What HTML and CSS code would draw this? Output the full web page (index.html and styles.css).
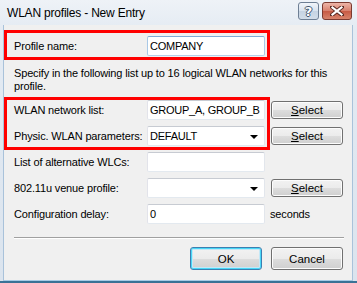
FILE: index.html
```html
<!DOCTYPE html>
<html>
<head>
<meta charset="utf-8">
<link rel="stylesheet" href="styles.css">
</head>
<body>
<div class="window">
  <div class="titlebar">
    <span class="title">WLAN profiles - New Entry</span>
    <div class="caption-btns">
      <span class="cbtn help">?</span>
      <span class="cbtn close">
        <svg width="14" height="10" viewBox="0 0 14 10">
          <path d="M2 1 L12 9 M12 1 L2 9" stroke="#5a2a22" stroke-width="4" stroke-linecap="square"/>
          <path d="M2.5 1.5 L11.5 8.5 M11.5 1.5 L2.5 8.5" stroke="#ffffff" stroke-width="2.2" stroke-linecap="square"/>
        </svg>
      </span>
    </div>
  </div>
  <div class="client">
    <div class="row first">
      <span class="label">Profile name:</span>
      <div class="field focus">COMPANY</div>
    </div>
    <p class="desc">Specify in the following list up to 16 logical WLAN networks for this profile.</p>
    <div class="rows">
      <div class="row">
        <span class="label">WLAN network list:</span>
        <div class="field">GROUP_A, GROUP_B</div>
        <button class="btn small"><u>S</u>elect</button>
      </div>
      <div class="row">
        <span class="label">Physic. WLAN parameters:</span>
        <div class="field combo">DEFAULT<span class="arrow"></span></div>
        <button class="btn small"><u>S</u>elect</button>
      </div>
      <div class="row">
        <span class="label">List of alternative WLCs:</span>
        <div class="field"></div>
      </div>
      <div class="row">
        <span class="label">802.11u venue profile:</span>
        <div class="field combo"><span class="arrow"></span></div>
        <button class="btn small"><u>S</u>elect</button>
      </div>
      <div class="row">
        <span class="label">Configuration delay:</span>
        <div class="field">0</div>
        <span class="unit">seconds</span>
      </div>
    </div>
    <div class="separator"></div>
    <div class="actions">
      <button class="btn big default">OK</button>
      <button class="btn big">Cancel</button>
    </div>
    <div class="mark mark-profile"></div>
    <div class="mark mark-list"></div>
  </div>
</div>
</body>
</html>
```
FILE: styles.css
```css
html, body {
  margin: 0;
  padding: 0;
  background: #dfe8f2;
}
.window {
  width: 357px;
  height: 283px;
  box-sizing: border-box;
  background: linear-gradient(#eef2f7, #e4ebf3 30px, #dbe4ee);
  padding: 0 4px 0 3px;
  display: flex;
  flex-direction: column;
  font-family: "Liberation Sans", Arial, sans-serif;
  font-size: 11px;
  letter-spacing: -0.15px;
  color: #000;
  border-bottom: 2px solid #3a7296;
}
.titlebar {
  height: 25px;
  display: flex;
  align-items: flex-start;
  justify-content: space-between;
  flex: none;
}
.title {
  font-size: 12px;
  letter-spacing: -0.2px;
  padding: 6px 0 0 4px;
  line-height: 14px;
  color: #000;
}
.caption-btns {
  display: flex;
  gap: 3px;
  padding-top: 2px;
  margin-right: 1px;
}
.cbtn {
  height: 18px;
  box-sizing: border-box;
  border: 1px solid #6e7f94;
  border-radius: 3px;
  display: flex;
  align-items: center;
  justify-content: center;
}
.help {
  width: 21px;
  background: linear-gradient(#f1f5fa, #d8e2ee 50%, #c5d3e3 51%, #d2dde9);
  font-weight: bold;
  font-size: 13px;
  color: #fff;
  letter-spacing: 0;
  text-shadow: -1px 0 #42556e, 1px 0 #42556e, 0 -1px #42556e, 0 1px #42556e;
  font-family: "DejaVu Sans", sans-serif;
}
.close {
  width: 30px;
  border-color: #7b3a30;
  background: linear-gradient(#edb5a8, #d77f6c 50%, #c75a44 51%, #d7836b);
}
.client {
  flex: 1;
  position: relative;
  background: #f0f0f0;
  border-left: 1px solid #a9c2da;
  border-right: 1px solid #a9c2da;
  border-bottom: 1px solid #a6cbe6;
  padding: 11px 0 0 10px;
}
.row {
  display: flex;
  align-items: center;
  height: 20px;
}
.label {
  width: 133px;
  flex: none;
  white-space: nowrap;
}
.field {
  width: 118px;
  height: 20px;
  box-sizing: border-box;
  flex: none;
  background: #fff;
  border: 1px solid;
  border-color: #c7cbd2 #e2e6ec #e3e9ef #e2e3ea;
  border-radius: 2px;
  padding: 0 2px;
  line-height: 18px;
  font-size: 11px;
  letter-spacing: -0.25px;
  white-space: nowrap;
  overflow: hidden;
  position: relative;
}
.field.focus {
  border-color: #7fa9d5 #a8c8e6 #b5d0ea #a8c8e6;
}
.combo .arrow {
  position: absolute;
  right: 6px;
  top: 8px;
  width: 0;
  height: 0;
  border-left: 4px solid transparent;
  border-right: 4px solid transparent;
  border-top: 4px solid #000;
}
.desc {
  margin: 11px 0 8px 0;
  width: 330px;
  line-height: 12.5px;
}
.rows {
  display: flex;
  flex-direction: column;
  gap: 6px;
}
.btn {
  font-family: "Liberation Sans", Arial, sans-serif;
  font-size: 11.5px;
  color: #000;
  box-sizing: border-box;
  border: 1px solid #707070;
  border-radius: 3px;
  background: linear-gradient(#f2f2f2, #ebebeb 50%, #dddddd 51%, #cfcfcf);
  box-shadow: inset 0 0 0 1px #fcfcfc;
  padding: 0;
  margin: 0;
}
.btn u {
  text-decoration: underline;
}
.btn.small {
  width: 72px;
  height: 18px;
  margin-left: 6px;
  line-height: 14px;
}
.unit {
  margin-left: 5px;
}
.separator {
  margin: 13px 0 0 0;
  width: 330px;
  height: 1px;
  background: #a0a0a0;
  border-bottom: 1px solid #fff;
}
.actions {
  display: flex;
  justify-content: flex-end;
  gap: 9px;
  width: 329px;
  margin-top: 8px;
}
.btn.big {
  width: 72px;
  height: 23px;
}
.btn.default {
  border-color: #3c7fb1;
  box-shadow: inset 0 0 0 1px #48d7f7, inset 0 0 0 2px #c4e8f7;
}
.mark {
  position: absolute;
  border: 3px solid #f00;
  box-sizing: border-box;
}
.mark-profile {
  left: 0;
  top: 5px;
  width: 266px;
  height: 30px;
}
.mark-list {
  left: 0;
  top: 72px;
  width: 266px;
  height: 53px;
}
```
